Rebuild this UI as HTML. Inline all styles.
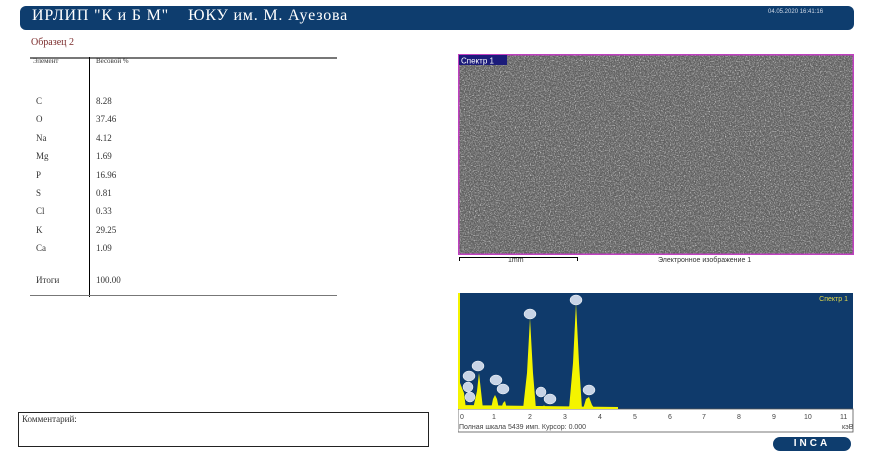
<!DOCTYPE html>
<html><head><meta charset="utf-8"><style>
body{margin:0;width:886px;height:464px;background:#fff;position:relative;overflow:hidden;font-family:"Liberation Serif","DejaVu Serif",serif;}
.a{position:absolute;}
.hdr{left:20px;top:6px;width:834px;height:24px;background:#0e3d6e;border-radius:6px;}
.t{font-size:9px;color:#333;}
</style></head><body>
<div class="a hdr"></div>
<div class="a" style="left:32px;top:7px;color:#fff;font-size:16px;white-space:pre;letter-spacing:0.8px;">ИРЛИП "К и Б М"    ЮКУ им. М. Ауезова</div>
<div class="a" style="left:768px;top:9px;color:#cfd8e6;font-size:6px;font-family:'Liberation Sans',sans-serif;">04.05.2020 16:41:16</div>
<div class="a t" style="left:31px;top:37px;color:#7a2a2a;font-size:10px;">Образец 2</div>
<div class="a" style="left:30px;top:57px;width:307px;height:2px;background:#777;"></div>
<div class="a" style="left:89px;top:57px;width:1px;height:240px;background:#000;"></div>
<div class="a" style="left:30px;top:295px;width:307px;height:1px;background:#777;"></div>
<div class="a t" style="left:33px;top:57px;font-size:7px;">Элемент</div>
<div class="a t" style="left:96px;top:57px;font-size:7px;">Весовой %</div>
<div class="a t" style="left:36px;top:92px;line-height:18.4px;">C<br>O<br>Na<br>Mg<br>P<br>S<br>Cl<br>K<br>Ca</div>
<div class="a t" style="left:96px;top:92px;line-height:18.4px;">8.28<br>37.46<br>4.12<br>1.69<br>16.96<br>0.81<br>0.33<br>29.25<br>1.09</div>
<div class="a t" style="left:36px;top:275px;">Итоги</div>
<div class="a t" style="left:96px;top:275px;">100.00</div>
<div class="a" style="left:18px;top:412px;width:409px;height:33px;border:1px solid #222;"></div>
<div class="a t" style="left:22px;top:414px;font-size:9px;">Комментарий:</div>

<svg class="a" style="left:458px;top:54px" width="396" height="201">
<filter id="n"><feTurbulence type="fractalNoise" baseFrequency="0.8" numOctaves="3" seed="3"/><feColorMatrix type="matrix" values="0 0 0 0 0.75  0 0 0 0 0.75  0 0 0 0 0.75  0 0 0 2.2 -1.0"/></filter>
<filter id="d"><feTurbulence type="fractalNoise" baseFrequency="0.6" numOctaves="2" seed="9"/><feColorMatrix type="matrix" values="0 0 0 0 0.2  0 0 0 0 0.2  0 0 0 0 0.2  0 0 0 2.2 -1.0"/></filter>
<rect x="0" y="0" width="396" height="201" fill="#5e5e5e"/>
<rect x="1" y="1" width="394" height="199" filter="url(#n)"/>
<rect x="1" y="1" width="394" height="199" filter="url(#d)"/>
<rect x="0.75" y="0.75" width="394.5" height="199.5" fill="none" stroke="#c040c0" stroke-width="1.5"/>
<rect x="1" y="1" width="48" height="10" fill="#1b1b7a"/>
<text x="3" y="9.5" fill="#fff" font-size="8" font-family="Liberation Sans">Спектр 1</text>
</svg>
<div class="a" style="left:459px;top:257px;width:118px;height:1px;background:#000;"></div>
<div class="a" style="left:459px;top:257px;width:1px;height:4px;background:#000;"></div>
<div class="a" style="left:577px;top:257px;width:1px;height:4px;background:#000;"></div>
<div class="a" style="left:508px;top:257px;font-size:7px;font-family:'Liberation Sans';color:#333">1mm</div>
<div class="a" style="left:658px;top:257px;font-size:7px;font-family:'Liberation Sans';color:#333">Электронное изображение 1</div>

<svg class="a" style="left:458px;top:293px" width="396" height="140" font-family="Liberation Sans">
<rect x="0" y="0" width="395" height="116" fill="#0f3a6b"/>
<rect x="0" y="116" width="395" height="23" fill="#fff" stroke="#555" stroke-width="0.8"/>
<rect x="0" y="0" width="2" height="116" fill="#f4f400"/>
<path fill="#f4f400" d="M2,116 L2,90 L6,100 L8,116 Z M15,116 L19,98 L21,80 L23,98 L25,116 Z M33,116 L35,106 L37,102 L39,106 L41,116 Z M43,116 L45,110 L47,108 L49,116 Z M65,116 L69,80 L72,25 L75,80 L78,116 Z M84,116 L86,112 L88,116 Z M111,116 L115,70 L118,10 L121,70 L124,116 Z M125,116 L128,106 L131,104 L134,112 L137,116 Z M2,116 L2,112 L160,114 L160,116 Z"/>
<text x="390" y="8" text-anchor="end" fill="#e0d84a" font-size="7">Спектр 1</text>
<g fill="#c8d4e6" stroke="#fff" stroke-width="0.5">
<ellipse cx="72" cy="21" rx="6" ry="5"/><ellipse cx="118" cy="7" rx="6" ry="5"/>
<ellipse cx="20" cy="73" rx="6" ry="5"/><ellipse cx="11" cy="83" rx="6" ry="5"/><ellipse cx="10" cy="94" rx="5" ry="5"/><ellipse cx="12" cy="104" rx="5" ry="5"/>
<ellipse cx="38" cy="87" rx="6" ry="5"/><ellipse cx="45" cy="96" rx="6" ry="5"/><ellipse cx="83" cy="99" rx="5" ry="5"/><ellipse cx="92" cy="106" rx="6" ry="5"/><ellipse cx="131" cy="97" rx="6" ry="5"/>
</g>
<g fill="#444" font-size="7">
<text x="2" y="126">0</text><text x="34" y="126">1</text><text x="70" y="126">2</text><text x="105" y="126">3</text><text x="140" y="126">4</text><text x="175" y="126">5</text><text x="210" y="126">6</text><text x="244" y="126">7</text><text x="279" y="126">8</text><text x="314" y="126">9</text><text x="346" y="126">10</text><text x="382" y="126">11</text>
<text x="1" y="136">Полная шкала 5439 имп. Курсор: 0.000</text><text x="384" y="136">кэВ</text>
</g>
</svg>
<div class="a" style="left:773px;top:437px;width:78px;height:14px;background:#0e3d6e;border-radius:7px;color:#fff;font:bold 10px 'Liberation Sans';text-align:center;line-height:14px;letter-spacing:3px;">INCA</div>
</body></html>
